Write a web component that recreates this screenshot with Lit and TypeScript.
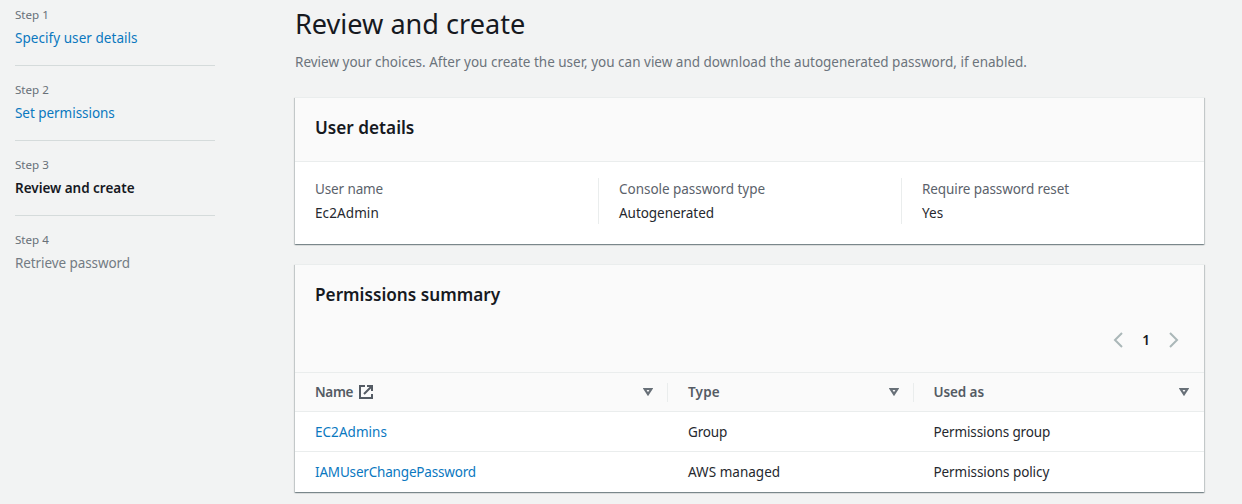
import { LitElement, html, css, svg, nothing } from "lit";
import { customElement } from "lit/decorators.js";
import { classMap } from "lit/directives/class-map.js";
import { styleMap } from "lit/directives/style-map.js";

interface Label { text: string; track?: number }

const label = ({ text, track = 0 }: Label) =>
  html`<span style=${styleMap({ letterSpacing: `${track}px` })}>${text}</span>`;

const steps = [
  { title: { text: "Specify user details", track: 0.05 }, state: "link" },
  { title: { text: "Set permissions", track: -0.04 }, state: "link" },
  { title: { text: "Review and create", track: -0.02 }, state: "current" },
  { title: { text: "Retrieve password", track: -0.09 }, state: "pending" },
];

const details: { name: Label; value: Label }[] = [
  { name: { text: "User name", track: -0.12 }, value: { text: "Ec2Admin", track: 0.1 } },
  { name: { text: "Console password type", track: -0.03 }, value: { text: "Autogenerated", track: -0.04 } },
  { name: { text: "Require password reset", track: -0.1 }, value: { text: "Yes", track: 0.1 } },
];

const columns: (Label & { external?: boolean })[] = [
  { text: "Name", track: -0.35, external: true },
  { text: "Type", track: 0.2 },
  { text: "Used as", track: -0.1 },
];

const rows: Label[][] = [
  [{ text: "EC2Admins", track: 0.04 }, { text: "Group", track: -0.18 }, { text: "Permissions group", track: -0.12 }],
  [{ text: "IAMUserChangePassword", track: -0.18 }, { text: "AWS managed", track: 0.02 }, { text: "Permissions policy", track: -0.08 }],
];

const chevron = (d: string) => svg`<svg class="chevron" width="16" height="16" viewBox="0 0 16 16">
  <path d=${d} fill="none" stroke="#aab7b8" stroke-width="2"/></svg>`;

const external = html`<svg class="external" width="16" height="16" viewBox="0 0 16 16" fill="none" stroke="#545b64" stroke-width="2">
  <path d="M7 2H2v12h12V10"/><path d="M9 2h5v5M6 10l8-8"/></svg>`;

const sort = html`<svg width="10" height="8" viewBox="0 0 10 8">
  <path d="M1.6 1h6.8L5 6.2z" fill="none" stroke="#687078" stroke-width="2.2"/></svg>`;

@customElement("app-root")
export class AppRoot extends LitElement {
  static styles = css`
    :host {
      display: grid;
      grid-template-columns: 200px 909px;
      column-gap: 80px;
      box-sizing: border-box;
      height: 504px;
      padding: 0 15px;
      overflow: hidden;
      background: #f2f3f3;
      color: #16191f;
      font: 13.5px/22px "Noto Sans", sans-serif;
    }
    h1, h2, p, ol, dl, dd { margin: 0; padding: 0; }
    ol { list-style: none; padding-top: 5px; }
    li { box-sizing: border-box; height: 75px; }
    .rule { border-bottom: 1px solid #d5dbdb; height: 61px; margin-bottom: 14px; }
    .step { font-size: 11.6px; line-height: 20px; color: #687078; }
    .title { padding-top: 2px; }
    .link { color: #0a78bf; }
    .current { font-weight: 600; }
    .pending { color: #737b83; }
    h1 { padding-top: 6px; font-size: 27.1px; line-height: 36px; font-weight: 400; }
    .intro { padding-top: 9px; color: #6c747c; white-space: nowrap; }
    h2 { font-size: 17.2px; line-height: 22px; font-weight: 600; }
    .card {
      box-sizing: border-box;
      background: #fff;
      border-top: 1px solid #eaeded;
      box-shadow: 0 1px 1px 0 rgba(0, 28, 36, 0.3), 1px 1px 1px 0 rgba(0, 28, 36, 0.15),
        -1px 1px 1px 0 rgba(0, 28, 36, 0.15);
    }
    .user { margin-top: 24px; height: 147px; }
    .perms { margin-top: 20px; height: 228px; }
    .head {
      box-sizing: border-box;
      height: 64px;
      padding: 19px 20px 0;
      background: #fafafa;
      border-bottom: 1px solid #eaeded;
    }
    .tall { height: 108px; }
    dl { display: grid; grid-template-columns: repeat(3, 303px); padding-top: 16px; }
    .item { height: 46px; padding-left: 20px; }
    .item + .item { border-left: 1px solid #eaeded; }
    dt { color: #5b626b; }
    dd, .cell:not(.link) { color: #25282e; }
    dt, dd { line-height: 24px; }
    .item dt { margin-top: -1px; }
    .pager { display: flex; justify-content: flex-end; align-items: center; height: 22px; margin-top: 23px; }
    .page { width: 38px; text-align: center; font-weight: 600; }
    .pager .chevron:last-child { margin-right: 3px; }
    .row {
      display: grid;
      grid-template-columns: 373px 245.5px 290.5px;
      align-items: center;
      height: 39px;
      border-bottom: 1px solid #eaeded;
    }
    .row:last-child { border: 0; height: 40px; }
    .thead { height: 38px; background: #fafafa; color: #545b64; font-weight: 600; }
    .cell { padding-left: 20px; }
    .th {
      box-sizing: border-box;
      display: flex;
      align-items: center;
      height: 19px;
      padding: 0 14px 0 20px;
      border-right: 1px solid #eaeded;
    }
    .th:last-child { border: 0; padding-right: 15px; }
    .th svg:last-child { margin-left: auto; }
    .th .external { margin-left: 5px; }
  `;

  render() {
    return html`
      <ol>
        ${steps.map((s, i) => html`<li class=${classMap({ rule: i < steps.length - 1 })}>
          <div class="step">Step ${i + 1}</div>
          <div class="title ${s.state}">${label(s.title)}</div>
        </li>`)}
      </ol>
      <main>
        <h1>Review and create</h1>
        <p class="intro">Review your choices. After you create the user, you can view and download the autogenerated password, if enabled.</p>
        <section class="card user">
          <div class="head"><h2>User details</h2></div>
          <dl>
            ${details.map((d) => html`<div class="item"><dt>${label(d.name)}</dt><dd>${label(d.value)}</dd></div>`)}
          </dl>
        </section>
        <section class="card perms">
          <div class="head tall">
            <h2>Permissions summary</h2>
            <div class="pager">${chevron("M11 1 4 8l7 7")}<span class="page">1</span>${chevron("M5 1l7 7-7 7")}</div>
          </div>
          <div class="row thead">
            ${columns.map((c) => html`<div class="th">${label(c)}${c.external ? external : nothing}${sort}</div>`)}
          </div>
          ${rows.map((r) => html`<div class="row">
            ${r.map((c, i) => html`<div class="cell ${i === 0 ? "link" : ""}">${label(c)}</div>`)}
          </div>`)}
        </section>
      </main>`;
  }
}
